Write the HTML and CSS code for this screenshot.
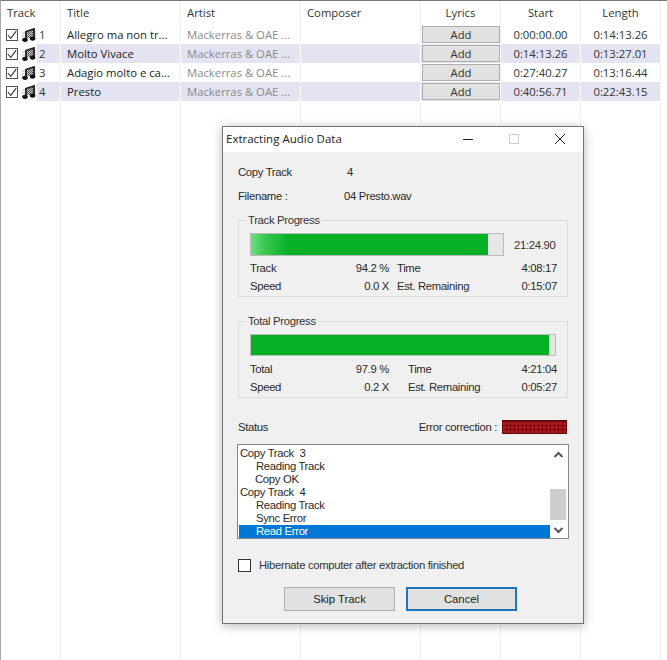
FILE: index.html
```html
<!DOCTYPE html>
<html lang="en">
<head>
<meta charset="utf-8">
<title>Extracting Audio Data</title>
<link rel="stylesheet" href="styles.css">
</head>
<body>
<svg class="defs" width="0" height="0" aria-hidden="true">
  <defs>
    <pattern id="dith" width="2" height="2" patternUnits="userSpaceOnUse">
      <rect width="2" height="2" fill="#c8c8c8"/>
      <rect width="1" height="1" fill="#444"/>
      <rect x="1" y="1" width="1" height="1" fill="#666"/>
    </pattern>
    <symbol id="note" viewBox="0 0 14 14">
      <path d="M3.5 3.5 12.5 .5V10H3.5Z" fill="url(#dith)"/>
      <path d="M0 5H3M0 8H3M12.5 4H14M12.5 7H14" stroke="#bbb" stroke-width="1"/>
      <path d="M4 3.5 12 1V10.5" fill="none" stroke="#222" stroke-width="1.8"/>
      <path d="M4 3V12" fill="none" stroke="#222" stroke-width="1.8"/>
      <ellipse cx="3" cy="11.8" rx="2.8" ry="2.1" fill="#111"/>
      <ellipse cx="10.6" cy="10.6" rx="2.8" ry="2.1" fill="#111"/>
    </symbol>
    <symbol id="check" viewBox="0 0 10 10">
      <path d="M.8 5 3.8 8.3 9.2 1.2" fill="none" stroke="#333" stroke-width="1.1"/>
    </symbol>
  </defs>
</svg>

<main class="list">
  <div class="row head">
    <div class="cell">Track</div>
    <div class="cell">Title</div>
    <div class="cell">Artist</div>
    <div class="cell">Composer</div>
    <div class="cell mid">Lyrics</div>
    <div class="cell mid">Start</div>
    <div class="cell mid">Length</div>
    <div class="cell end"></div>
  </div>

  <div class="row">
    <div class="cell track"><span class="tick"><svg width="10" height="10"><use href="#check"/></svg></span><svg class="note" width="14" height="14"><use href="#note"/></svg><span class="num">1</span></div>
    <div class="cell">Allegro ma non tr...</div>
    <div class="cell dim">Mackerras &amp; OAE ...</div>
    <div class="cell"></div>
    <div class="cell lyr"><button class="add">Add</button></div>
    <div class="cell mid">0:00:00.00</div>
    <div class="cell mid">0:14:13.26</div>
    <div class="cell end"></div>
  </div>
  <div class="row alt">
    <div class="cell track"><span class="tick"><svg width="10" height="10"><use href="#check"/></svg></span><svg class="note" width="14" height="14"><use href="#note"/></svg><span class="num">2</span></div>
    <div class="cell">Molto Vivace</div>
    <div class="cell dim">Mackerras &amp; OAE ...</div>
    <div class="cell"></div>
    <div class="cell lyr"><button class="add">Add</button></div>
    <div class="cell mid">0:14:13.26</div>
    <div class="cell mid">0:13:27.01</div>
    <div class="cell end"></div>
  </div>
  <div class="row">
    <div class="cell track"><span class="tick"><svg width="10" height="10"><use href="#check"/></svg></span><svg class="note" width="14" height="14"><use href="#note"/></svg><span class="num">3</span></div>
    <div class="cell">Adagio molto e ca...</div>
    <div class="cell dim">Mackerras &amp; OAE ...</div>
    <div class="cell"></div>
    <div class="cell lyr"><button class="add">Add</button></div>
    <div class="cell mid">0:27:40.27</div>
    <div class="cell mid">0:13:16.44</div>
    <div class="cell end"></div>
  </div>
  <div class="row alt">
    <div class="cell track"><span class="tick"><svg width="10" height="10"><use href="#check"/></svg></span><svg class="note" width="14" height="14"><use href="#note"/></svg><span class="num">4</span></div>
    <div class="cell">Presto</div>
    <div class="cell dim">Mackerras &amp; OAE ...</div>
    <div class="cell"></div>
    <div class="cell lyr"><button class="add">Add</button></div>
    <div class="cell mid">0:40:56.71</div>
    <div class="cell mid">0:22:43.15</div>
    <div class="cell end"></div>
  </div>

  <div class="row filler">
    <div class="cell"></div><div class="cell"></div><div class="cell"></div><div class="cell"></div>
    <div class="cell"></div><div class="cell"></div><div class="cell"></div><div class="cell end"></div>
  </div>
</main>

<section class="dialog">
  <header class="titlebar">
    <span class="title">Extracting Audio Data</span>
    <span class="winbtn"><svg width="12" height="12"><path d="M1 6.5H11" stroke="#222"/></svg></span>
    <span class="winbtn"><svg width="12" height="12"><rect x="1.5" y="1.5" width="9" height="9" fill="none" stroke="#ccc"/></svg></span>
    <span class="winbtn"><svg width="12" height="12"><path d="M1 1 11 11M11 1 1 11" stroke="#222" fill="none"/></svg></span>
  </header>
  <div class="body">
    <div class="info first"><span class="info-k">Copy Track</span><span class="info-v track-no">4</span></div>
    <div class="info"><span class="info-k">Filename :</span><span class="info-v">04 Presto.wav</span></div>

    <fieldset class="group">
      <legend>Track Progress</legend>
      <div class="bar-line">
        <div class="bar short"><div class="fill fade" style="width:94%"></div></div>
        <span class="bar-time">21:24.90</span>
      </div>
      <div class="stats">
        <span>Track</span><span class="r">94.2 %</span><span class="s">Time</span><span class="r">4:08:17</span>
        <span>Speed</span><span class="r">0.0 X</span><span class="s">Est. Remaining</span><span class="r">0:15:07</span>
      </div>
    </fieldset>

    <fieldset class="group second">
      <legend>Total Progress</legend>
      <div class="bar-line total">
        <div class="bar"><div class="fill" style="width:98%"></div></div>
      </div>
      <div class="stats wide">
        <span>Total</span><span class="r">97.9 %</span><span class="s">Time</span><span class="r">4:21:04</span>
        <span>Speed</span><span class="r">0.2 X</span><span class="s">Est. Remaining</span><span class="r">0:05:27</span>
      </div>
    </fieldset>

    <div class="status-line">
      <span class="status-k">Status</span>
      <span class="err">Error correction :</span>
      <span class="led"></span>
    </div>

    <div class="log">
      <ul class="log-lines">
        <li>Copy Track&nbsp; 3</li>
        <li class="in">Reading Track</li>
        <li class="in ok">Copy OK</li>
        <li>Copy Track&nbsp; 4</li>
        <li class="in">Reading Track</li>
        <li class="in">Sync Error</li>
        <li class="in sel">Read Error</li>
      </ul>
      <div class="scroll">
        <svg width="17" height="16"><path d="M4.5 10 8.5 6 12.5 10" fill="none" stroke="#555" stroke-width="2"/></svg>
        <span class="thumb"></span>
        <svg width="17" height="16"><path d="M4.5 6 8.5 10 12.5 6" fill="none" stroke="#555" stroke-width="2"/></svg>
      </div>
    </div>

    <label class="hib"><span class="box"></span>Hibernate computer after extraction finished</label>

    <div class="actions">
      <button class="btn">Skip Track</button>
      <button class="btn default">Cancel</button>
    </div>
  </div>
</section>
</body>
</html>
```
FILE: styles.css
```css
* { box-sizing: border-box; }
html, body { height: 100%; }
body {
  margin: 0;
  background: #fff;
  font-family: "Open Sans", "Noto Sans", sans-serif;
  font-size: 11.3px;
  color: #222;
  overflow: hidden;
}
.defs { position: absolute; }

.list {
  height: 660px;
  display: flex;
  flex-direction: column;
  border-top: 1px solid #777;
  border-left: 1px solid #aaa;
}
.row {
  display: grid;
  grid-template-columns: 60px 120px 120px 120px 80px 80px 80px 6px;
  height: 19px;
  flex: none;
  line-height: 19px;
}
.row.head { height: 24px; line-height: 23px; }
.row.head .cell { color: #333; }
.row.filler { flex: 1; }
.cell {
  border-right: 1px solid #f0f0f0;
  padding-left: 6px;
  white-space: nowrap;
  overflow: hidden;
}
.cell.mid { text-align: center; padding-left: 0; color: #333; }
.cell.end { border-right: 0; }
.cell.dim { color: #8a8a8a; }
.alt .cell { background: #e3e3f2; border-right-color: #fff; background-clip: padding-box; }
.alt .cell.end { background: none; }
.cell.track {
  display: flex;
  align-items: center;
  padding-left: 5px;
  background: none !important;
}
.tick {
  width: 12px;
  height: 12px;
  border: 1px solid #555;
  display: flex;
  align-items: center;
  justify-content: center;
  background: #fff;
}
.note { margin-left: 4px; }
.num {
  margin-left: 1px;
  width: 23px;
  height: 19px;
  padding-left: 2px;
  color: #333;
}
.alt .num { background: #e3e3f2; }
.cell.lyr { padding: 1px 0 0 1px; }
.add {
  display: block;
  width: 78px;
  height: 17px;
  padding: 0;
  border: 1px solid #adadad;
  background: #e1e1e1;
  font: inherit;
  color: #333;
  line-height: 14px;
}

.dialog {
  position: absolute;
  left: 222px;
  top: 126px;
  width: 362px;
  height: 498px;
  background: #f0f0f0;
  border: 1px solid #737373;
  box-shadow: 0 2px 10px rgba(0, 0, 0, .28);
  display: flex;
  flex-direction: column;
}
.titlebar {
  height: 25px;
  flex: none;
  background: #fff;
  display: flex;
  align-items: center;
  padding: 0 0 2px 3px;
  color: #222;
}
.title { flex: 1; font-size: 11.5px; }
.winbtn {
  width: 46px;
  display: flex;
  justify-content: center;
}
.body {
  flex: 1;
  padding: 0 15px;
  display: flex;
  flex-direction: column;
  font-family: "Liberation Sans", Arial, sans-serif;
  font-size: 11.3px;
  letter-spacing: -.32px;
  color: #2a2a2a;
}
.info { display: flex; height: 24px; line-height: 24px; }
.info.first { margin-top: 8px; }
.info-k { width: 106px; }
.track-no { padding-left: 3px; }

.group {
  margin: 5px 0 0;
  border: 1px solid #dcdcdc;
  padding: 0 0 0 11px;
  height: 84px;
  min-width: 0;
  width: 330px;
}
.group legend {
  padding: 0 1px;
  margin-left: -3px;
  line-height: 14px;
  color: #333;
}
.group.second { margin-top: 17px; }
.bar-line {
  display: flex;
  align-items: center;
  height: 23px;
  margin-top: 6px;
  width: 307px;
}
.bar-line.total { width: 306px; align-items: flex-start; }
.bar {
  flex: 1;
  height: 22px;
  background: #e6e6e6;
  border: 1px solid #bcbcbc;
}
.bar.short { flex: none; width: 254px; height: 23px; }
.fill { height: 100%; background: #06b025; }
.fill.fade { background: linear-gradient(90deg, #6fe07f 0, #3fca55 12px, #06b025 38px); }
.bar-time { margin-left: 10px; color: #333; }
.stats {
  display: grid;
  grid-template-columns: 70px 69px 1fr auto;
  width: 307px;
  margin-top: 3px;
  line-height: 18px;
}
.stats .s { padding-left: 8px; }
.stats.wide .s { padding-left: 19px; }
.r { text-align: right; }

.status-line {
  display: flex;
  align-items: center;
  height: 14px;
  margin-top: 22px;
  width: 329px;
}
.status-k { flex: 1; }
.err { margin-right: 5px; }
.led {
  width: 65px;
  height: 14px;
  border: 1px solid #5a0a0a;
  background-color: #c8101a;
  background-image:
    repeating-linear-gradient(90deg, transparent 0 3px, #6f0a0e 3px 4px),
    repeating-linear-gradient(0deg, transparent 0 3px, #6f0a0e 3px 4px);
}

.log {
  margin: 10px 0 0 -1px;
  width: 332px;
  height: 95px;
  flex: none;
  background: #fff;
  border: 1px solid #828790;
  padding: 2px 1px 0;
  display: flex;
}
.log-lines {
  list-style: none;
  margin: 0;
  padding: 0;
  flex: 1;
  line-height: 13px;
}
.log-lines li { padding-left: 1px; height: 13px; white-space: nowrap; }
.log-lines .in { padding-left: 17px; }
.log-lines .ok { padding-left: 16px; }
.log-lines .sel { background: #0078d7; color: #fff; }
.scroll {
  width: 17px;
  display: flex;
  flex-direction: column;
  justify-content: space-between;
  align-items: center;
  position: relative;
}
.scroll svg { display: block; }
.thumb {
  position: absolute;
  left: 0;
  top: 42px;
  width: 16px;
  height: 31px;
  background: #cdcdcd;
}

.hib {
  display: flex;
  align-items: center;
  margin-top: 19px;
  height: 14px;
  color: #333;
}
.box {
  width: 13px;
  height: 13px;
  border: 1px solid #333;
  background: #fff;
  margin-right: 8px;
}
.actions {
  display: flex;
  gap: 11px;
  margin: 15px 0 0 46px;
}
.btn {
  width: 111px;
  height: 24px;
  padding: 0;
  border: 1px solid #adadad;
  background: #e1e1e1;
  font: inherit;
  color: #222;
}
.btn.default { border: 2px solid #1c74ba; }
```
